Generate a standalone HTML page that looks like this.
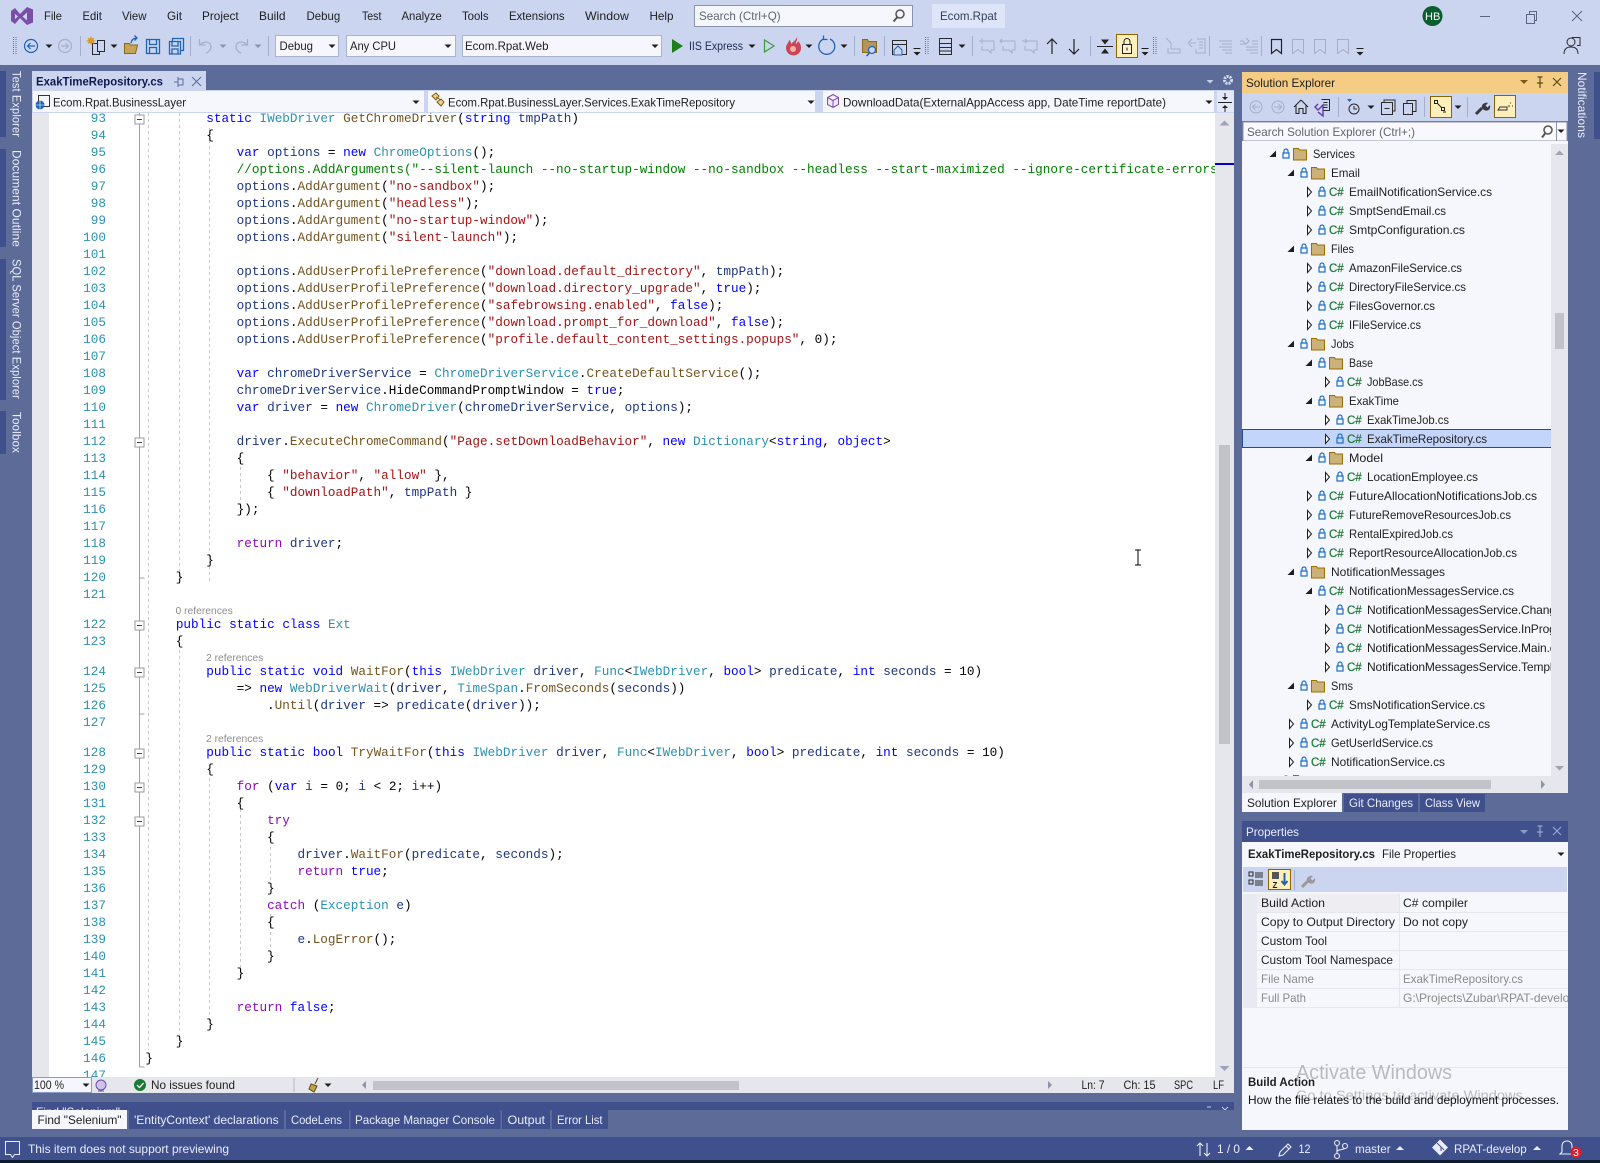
<!DOCTYPE html>
<html lang="en"><head><meta charset="utf-8"><title>ExakTimeRepository.cs - Visual Studio</title>
<style>
html,body{margin:0;padding:0;background:#5d6b99;}
body{position:relative;width:1600px;height:1163px;overflow:hidden;}
svg{position:absolute;left:0;top:0;font:12px "Liberation Sans",sans-serif;fill:#1e1e1e;}
.w{fill:#e9edfa}.g{fill:#8a8a8a}
.n{letter-spacing:-.12px}
#ed{position:absolute;left:32px;top:113px;width:1183px;height:964px;overflow:hidden;font:12.68px/17px "Liberation Mono",monospace;color:#000;}
#in{margin-top:-2.8px}
#ed p{margin:0;height:17px;position:relative;white-space:pre;padding-left:113.4px;}
#ed p a{position:absolute;left:0;top:0;width:74px;text-align:right;color:#2b91af;}
#ed div.l{height:13px;font:10.3px/13px "Liberation Sans",sans-serif;color:#8e8e8e;white-space:pre;position:relative;top:2px;}
.k{color:#0000ff}.t{color:#2b91af}.m{color:#74531f}.s{color:#a31515}.c{color:#008000}.v{color:#1f377f}.f{color:#8f08c4}
</style></head><body>
<svg width="1600" height="1163" viewBox="0 0 1600 1163">
<defs>
<path id="td" d="M-3.5-1.5h7l-3.500 3.500z" fill="#1e1e1e"/>
<path id="tg" d="M-3.500-1.500h7l-3.500 3.500z" fill="#8c94ad"/>
<g id="tb"><path d="M-3.500-3.500h7" stroke="#1e1e1e" fill="none"/><path d="M-3.500 0h7l-3.500 3.500z" fill="#1e1e1e"/></g>
<path id="tu" d="M-4 2h8l-4-4z" fill="#e9edfa"/>
<g id="lk" fill="none" stroke="#1c6ec4" stroke-width="1.200"><path d="M-2-1v-2a2 2 0 0 1 4 0v2"/><rect x="-3" y="-1" width="6" height="5"/></g>
<g id="F"><path d="M1269.500-1h6.500v-6.500z" fill="#1e1e1e"/><use href="#lk" x="1286" y="-4"/><path d="M1293.500-9.500h5l1 1.500h7v10h-13z" fill="#cbb27a" stroke="#996f00"/></g>
<g id="C"><path d="M1271.500-8.500l4 4.500-4 4.500z" fill="#fff" stroke="#1e1e1e"/><use href="#lk" x="1286" y="-4"/><text x="1293" y="0" style="font-size:11.500px" fill="#1e7b34" stroke="#1e7b34" stroke-width=".25">C#</text></g>
<g id="O"><path d="M1269.500-1h6.500v-6.500z" fill="#1e1e1e"/><use href="#lk" x="1286" y="-4"/><text x="1293" y="0" style="font-size:11.500px" fill="#1e7b34" stroke="#1e7b34" stroke-width=".25">C#</text></g>
<g id="cm" fill="none" stroke="#a6aec8"><path d="M-5-5h12v9h-3v3l-3-3h-6v-4"/></g>
<g id="grip" fill="none" stroke="#5d6b99" stroke-dasharray="1 1"><path d="M-1.500-9v18M1-9v18"/></g>
<g id="fb"><rect x="-4.500" y="-4.500" width="9" height="9" fill="#fff" stroke="#9a9a9a"/><path d="M-2.500 0h5" stroke="#444"/></g>
<clipPath id="tree"><rect x="1243" y="144" width="308" height="632"/></clipPath>
<clipPath id="pv"><rect x="1400" y="894" width="168" height="120"/></clipPath>
<clipPath id="fp"><rect x="32" y="1102" width="1202" height="8"/></clipPath>
</defs>

<!-- frame -->
<rect width="1600" height="1163" fill="#5d6b99"/>
<rect width="1600" height="65" fill="#ccd5f0"/>

<!-- logo & menu -->
<path d="M11 11l4-3 5 6 7-7 6 2.500v13l-6 2.500-7-7-5 6-4-3v-10zm4 3v5l3-2.500zm12-1.500l-4.500 4 4.500 4z" fill="#7b4fa8" fill-rule="evenodd"/>
<g><text x="44" y="20" textLength="18" lengthAdjust="spacingAndGlyphs">File</text><text x="82.500" y="20" textLength="19.400" lengthAdjust="spacingAndGlyphs">Edit</text><text x="122" y="20" textLength="24.500" lengthAdjust="spacingAndGlyphs">View</text><text x="167" y="20" textLength="15" lengthAdjust="spacingAndGlyphs">Git</text><text x="202" y="20" textLength="36.700" lengthAdjust="spacingAndGlyphs">Project</text><text x="259" y="20" textLength="26.500" lengthAdjust="spacingAndGlyphs">Build</text><text x="306.500" y="20" textLength="33.700" lengthAdjust="spacingAndGlyphs">Debug</text><text x="362" y="20" textLength="19.400" lengthAdjust="spacingAndGlyphs">Test</text><text x="401.500" y="20" textLength="40.300" lengthAdjust="spacingAndGlyphs">Analyze</text><text x="462" y="20" textLength="26.500" lengthAdjust="spacingAndGlyphs">Tools</text><text x="509" y="20" textLength="55.600" lengthAdjust="spacingAndGlyphs">Extensions</text><text x="585" y="20" textLength="43.900" lengthAdjust="spacingAndGlyphs">Window</text><text x="649.500" y="20" textLength="24" lengthAdjust="spacingAndGlyphs">Help</text></g>
<rect x="694.500" y="5.500" width="218" height="21" fill="#f6f7fd" stroke="#8a93ad"/>
<text x="699" y="20" fill="#5f6670" textLength="81.600" lengthAdjust="spacingAndGlyphs">Search (Ctrl+Q)</text>
<g fill="none" stroke="#555" stroke-width="1.500"><circle cx="900" cy="14" r="4"/><path d="M897.500 17l-4 4.500" stroke-width="2"/></g>
<rect x="932" y="4" width="73" height="24" fill="#dfe5f8"/><text x="940" y="20" fill="#333d5c" textLength="57" lengthAdjust="spacingAndGlyphs">Ecom.Rpat</text>
<circle cx="1432.500" cy="16" r="10" fill="#0b5c2e"/><text x="1425" y="20" fill="#fff" style="font-size:11px">HB</text>
<g fill="none" stroke="#5b6686"><path d="M1480 16.500h10M1526.500 14.500h8v9h-8zM1529.500 14.500v-3h7v9h-2M1572 11l10 10M1582 11l-10 10"/></g>

<!-- toolbar -->
<use href="#grip" x="15" y="46"/>
<g fill="none" stroke="#1e64b4" stroke-width="1.200"><circle cx="31" cy="46" r="6.500"/><path d="M35 46h-7.500M30.500 43l-3 3 3 3"/></g><use href="#td" x="49" y="46"/>
<g fill="none" stroke="#a6aec8" stroke-width="1.200"><circle cx="65" cy="46" r="6.500"/><path d="M61 46h7.500M65.500 43l3 3-3 3"/></g>
<path d="M80.500 36v20M190.500 36v20M268.500 36v20M854.500 36v20M884.500 36v20M972.500 36v20M1090.500 36v20M1209.500 36v20M1261.500 36v20" stroke="#a4afce"/>
<g fill="none" stroke="#2a2a2a"><rect x="92.500" y="43.500" width="7" height="11"/><rect x="97.500" y="40.500" width="7" height="11" fill="#ccd5f0"/></g><path d="M91 36l1 2.500 2.500-1-1 2.500 2.500 1-2.500 1 1 2-2.500-1-1 2.500-1-2.500-2.500 1 1-2-2.500-1 2.500-1-1-2.500 2.500 1z" fill="#d99a2b"/>
<use href="#td" x="114" y="46"/>
<path d="M124.500 53.500v-10h5l1 1.500h7l-2 8.500z" fill="#c7a356" stroke="#8b6a14"/><path d="M131 43q1-5 6-5M134.500 35.500l2.500 2.500-2.500 2.500" fill="none" stroke="#1e64b4" stroke-width="1.300"/>
<g fill="none" stroke="#1e64b4" stroke-width="1.300"><path d="M146.500 39.500h13v14h-13zM149.500 39.500v5h7v-5M149.500 53.500v-6h7v6"/><path d="M169.500 41.500h11v12.500h-11zM172 41.500v4.500h6v-4.500M172 54v-5h6v5M172.500 41v-2.500h11v12h-3"/></g>
<g fill="none" stroke="#a6aec8" stroke-width="1.300"><path d="M199.500 39v6h6M200 45c3-4 10-4 11 1 .5 3-2 6-5 7"/><path d="M247.500 39v6h-6M247 45c-3-4-10-4-11 1-.5 3 2 6 5 7"/></g>
<use href="#tg" x="223" y="46"/><use href="#tg" x="258" y="46"/>
<g fill="#f6f7fd" stroke="#a9b4d2"><rect x="275.500" y="35.500" width="63" height="21"/><rect x="346.500" y="35.500" width="109" height="21"/><rect x="462.500" y="35.500" width="199" height="21"/></g>
<text x="279.500" y="50" textLength="33.500" lengthAdjust="spacingAndGlyphs">Debug</text><text x="350" y="50" textLength="46" lengthAdjust="spacingAndGlyphs">Any CPU</text><text x="465" y="50" textLength="83.500" lengthAdjust="spacingAndGlyphs">Ecom.Rpat.Web</text>
<use href="#td" x="332" y="46"/><use href="#td" x="448" y="46"/><use href="#td" x="655" y="46"/>
<path d="M672 39l11 7-11 7z" fill="#1e7e1e"/><text x="689" y="50" fill="#1b2a55" textLength="54" lengthAdjust="spacingAndGlyphs">IIS Express</text><use href="#td" x="752" y="46"/>
<path d="M764.500 40l9.500 6-9.500 6z" fill="none" stroke="#3f9a3f" stroke-width="1.200"/>
<path d="M797 37c1 4-2 4-1 7 1-1 2-2 2-3 3 3 3 6 3 7a7.500 7.500 0 0 1-15 0c0-4 3-5 3-8 2 1 2 3 2 4 2-2 5-4 6-7z" fill="#cc4452"/><circle cx="793" cy="49" r="3" fill="#f3b2ad"/><use href="#td" x="809" y="46"/>
<path d="M830 39a8 8 0 1 1-6.500 0M823.500 35.500v4h4" fill="none" stroke="#1e64b4" stroke-width="1.300"/><use href="#td" x="844" y="46"/>
<path d="M862.500 52.500v-13h5l1 2h8v11z" fill="#b3955a" stroke="#8b6a14"/><circle cx="872" cy="50" r="3.500" fill="#ccd5f0" stroke="#1e64b4" stroke-width="1.200"/><path d="M869.500 53l-3 3" stroke="#1e64b4" stroke-width="1.500"/>
<path d="M892.500 40.500h14v14h-14zM892.500 44.500h14" fill="none" stroke="#2a2a2a"/><path d="M894 50l4-4 4 4v5h-8z" fill="#ccd5f0" stroke="#1e64b4"/>
<use href="#tb" x="917" y="52"/><use href="#grip" x="927" y="46"/>
<path d="M939.500 38.500h12v16h-12zM939.500 43.500h12M939.500 47.500h12M939.500 51h12" fill="none" stroke="#2a2a2a"/><use href="#td" x="962" y="46"/>
<use href="#cm" x="987" y="46"/><use href="#cm" x="1008" y="46"/><use href="#cm" x="1030" y="46"/>
<path d="M979 41h6M982 38v6M1000 41h5M1002 39l-2 2 2 2M1022 41h5M1025 39l2 2-2 2" fill="none" stroke="#a6aec8"/>
<g fill="none" stroke="#222" stroke-width="1.200"><path d="M1052 54v-15M1047 44l5-5 5 5M1074 39v15M1069 49l5 5 5-5"/></g>
<path d="M1097 46.500h16" stroke="#222"/><path d="M1105 44.500l-4-5h8zM1105 48.500l-4 5h8z" fill="#222"/>
<rect x="1116.500" y="34.500" width="21" height="23" fill="#ffefbb" stroke="#8f6100"/><rect x="1122.500" y="44.500" width="9" height="9" fill="#fff3cf" stroke="#222"/><path d="M1124 44.500v-3a3 3 0 0 1 6 0v3M1127 47.500v3" fill="none" stroke="#222"/>
<use href="#tb" x="1145" y="52"/><use href="#grip" x="1155" y="46"/>
<g fill="none" stroke="#a6aec8"><path d="M1166 38l5 5v6h9v4h-12v-5M1188 43l4-4M1188 43l4 4M1190 43h6M1197 39h8v14h-9v-4M1199 42h4M1199 45h4M1199 48h4M1219 41h13M1222 44h10M1219 47h13M1222 50h10M1225 53h7M1240 41h3l3 3h-6M1246 38l3 3-3 3M1252 41h6M1252 44h6M1246 47h12M1246 50h12M1250 53h8"/><path d="M1292.500 39.500h11v14l-5.500-4-5.500 4zM1314.500 39.500h11v14l-5.500-4-5.500 4zM1337.500 39.500h11v14l-5.500-4-5.500 4z"/></g>
<path d="M1271.500 39.500h10v14l-5-4-5 4z" fill="none" stroke="#222" stroke-width="1.200"/><use href="#tb" x="1360" y="52"/>
<g fill="none" stroke="#2a2a2a"><circle cx="1571" cy="42" r="4"/><path d="M1564 54c0-5 3-7 7-7s7 2 7 7M1572 37.500h8v8h-3"/></g>

<!-- left side tabs -->
<g fill="#40508d"><rect x="0" y="71" width="6" height="66"/><rect x="0" y="149" width="6" height="98"/><rect x="0" y="259" width="6" height="141"/><rect x="0" y="411" width="6" height="43"/><rect x="1594" y="72" width="6" height="67"/></g>
<g class="w" style="letter-spacing:.1px"><text transform="translate(12.500,71) rotate(90)" textLength="66" lengthAdjust="spacingAndGlyphs">Test Explorer</text><text transform="translate(12.500,150) rotate(90)" textLength="97" lengthAdjust="spacingAndGlyphs">Document Outline</text><text transform="translate(12.500,259) rotate(90)" textLength="140" lengthAdjust="spacingAndGlyphs">SQL Server Object Explorer</text><text transform="translate(12.500,412) rotate(90)" textLength="41" lengthAdjust="spacingAndGlyphs">Toolbox</text><text transform="translate(1578,72) rotate(90)" textLength="66" lengthAdjust="spacingAndGlyphs">Notifications</text></g>

<!-- editor tab -->
<rect x="32" y="71" width="174" height="19" fill="#ccd5f0"/>
<text x="36" y="85.500" style="font-weight:bold" fill="#0e1a4d" textLength="127" lengthAdjust="spacingAndGlyphs">ExakTimeRepository.cs</text>
<g fill="none" stroke="#5d6b99"><path d="M174 82h4M178 79h5v6h-5zM178 77v10M192 77l9 9M201 77l-9 9" /></g>
<path d="M1206.500 80h7l-3.500 3.500z" fill="#c6cee8"/>
<circle cx="1228" cy="80" r="3.500" fill="none" stroke="#d6dcf2" stroke-width="3" stroke-dasharray="2 1"/>

<!-- nav bar -->
<rect x="32" y="90" width="1202" height="23" fill="#ccd5f0"/>
<g fill="#f6f7fd"><rect x="33" y="91" width="391" height="21"/><rect x="428" y="91" width="387" height="21"/><rect x="823" y="91" width="391" height="21"/><rect x="1217" y="91" width="17" height="21" fill="#e4e9f9"/></g>
<rect x="38.500" y="95.500" width="11" height="11" fill="none" stroke="#333"/><circle cx="40" cy="105" r="4.500" fill="#1e64b4"/><path d="M35.500 105h9M40 100.500v9" stroke="#fff" stroke-width=".6"/>
<text x="53" y="106.500" textLength="133" lengthAdjust="spacingAndGlyphs">Ecom.Rpat.BusinessLayer</text><use href="#td" x="416" y="102"/>
<path d="M432 96l4-3 3 3-3 4zM437 102l4-3 3 3-3 4zM436 97l5 3" fill="#f0d28a" stroke="#7a5a14"/><text x="448" y="106.500" textLength="287" lengthAdjust="spacingAndGlyphs">Ecom.Rpat.BusinessLayer.Services.ExakTimeRepository</text><use href="#td" x="811" y="102"/>
<path d="M833 94.500l5.500 3v7l-5.500 3-5.500-3v-7zM827.500 97.500l5.500 3 5.500-3M833 100.500v7" fill="#f1e8fa" stroke="#7b4fa8"/><text x="843" y="106.500" textLength="323" lengthAdjust="spacingAndGlyphs">DownloadData(ExternalAppAccess app, DateTime reportDate)</text><use href="#td" x="1209" y="102"/>
<path d="M1218 102.500h14M1225 93v6M1225 106v6" stroke="#222"/><path d="M1222 97l3 3 3-3zM1222 108l3-3 3 3z" fill="#222"/>

<!-- editor body -->
<rect x="32" y="113" width="1183" height="964" fill="#fff"/>
<rect x="32" y="113" width="17" height="964" fill="#e6e7ed"/>
<path d="M139.500 113v954h5M139.500 714h5M139.500 578h5" fill="none" stroke="#a0a0a0"/>
<g fill="none" stroke="#c8c8c8" stroke-dasharray="3 3"><path d="M148.500 113v937M179.500 113v472M179.500 650v390M209.500 128v453M209.500 778v243M240.500 461v45M240.500 797v178M270.500 847v34M270.500 914v34"/></g>
<use href="#fb" x="139.500" y="119.500"/><use href="#fb" x="139.500" y="442.500"/><use href="#fb" x="139.500" y="625.500"/><use href="#fb" x="139.500" y="672.500"/><use href="#fb" x="139.500" y="753.500"/><use href="#fb" x="139.500" y="787.500"/><use href="#fb" x="139.500" y="821.500"/>

<!-- editor scrollbar -->
<rect x="1215" y="113" width="19" height="964" fill="#e6e7ed"/>
<path d="M1219.500 125.500h10l-5-5zM1219.500 1066h10l-5 5z" fill="#9ea4b4"/>
<rect x="1219" y="445" width="11" height="299" fill="#c2c3c9"/>
<rect x="1215" y="163" width="19" height="2" fill="#0000d0"/>
<path d="M1135 550h6M1138 550v15M1135 565h6" stroke="#000" fill="none"/>

<!-- editor status -->
<rect x="32" y="1077" width="1202" height="16" fill="#e6e7ed"/>
<rect x="32.500" y="1077.500" width="59" height="15" fill="#f6f7fd" stroke="#8a99c8"/><text x="34" y="1089" textLength="30" lengthAdjust="spacingAndGlyphs">100 %</text><use href="#td" x="86" y="1085"/>
<circle cx="101" cy="1085" r="5" fill="#cfc3ea" stroke="#6a4fa8"/><path d="M98 1091h6" stroke="#6a4fa8"/>
<circle cx="140" cy="1085" r="6" fill="#1a7a34"/><path d="M137 1085l2.500 2.500 4-4.500" stroke="#fff" stroke-width="1.300" fill="none"/>
<text x="151" y="1089" textLength="84" lengthAdjust="spacingAndGlyphs">No issues found</text><path d="M294 1078v14" stroke="#b5b8c4"/>
<path d="M318 1078l-3 6M311 1084l6 2-3 6-5-3z" fill="#c4a44a" stroke="#5b4a1e"/><use href="#td" x="328" y="1085"/>
<path d="M366 1081v8l-4-4z" fill="#8e94a6"/><rect x="373" y="1081" width="366" height="9" fill="#c2c3c9"/><path d="M1048 1081v8l4-4z" fill="#8e94a6"/>
<text x="1081.500" y="1089" textLength="23" lengthAdjust="spacingAndGlyphs">Ln: 7</text><text x="1123.500" y="1089" textLength="32" lengthAdjust="spacingAndGlyphs">Ch: 15</text><text x="1174" y="1089" textLength="19" lengthAdjust="spacingAndGlyphs">SPC</text><text x="1213" y="1089" textLength="11" lengthAdjust="spacingAndGlyphs">LF</text>

<!-- bottom tool window -->
<rect x="32" y="1102" width="1202" height="8" fill="#40508d"/>
<g clip-path="url(#fp)"><text x="36" y="1116" class="w" textLength="84" lengthAdjust="spacingAndGlyphs">Find "Selenium"</text><path d="M1207 1107h4M1222 1107l6 6M1228 1107l-6 6" stroke="#c6cee8"/></g>
<rect x="32" y="1110" width="95" height="19" fill="#f6f7fd"/><text x="37.500" y="1124" textLength="84" lengthAdjust="spacingAndGlyphs">Find "Selenium"</text>
<g fill="#40508d"><rect x="129" y="1110" width="155" height="19"/><rect x="286" y="1110" width="63" height="19"/><rect x="350.500" y="1110" width="150" height="19"/><rect x="502" y="1110" width="48" height="19"/><rect x="552" y="1110" width="56" height="19"/></g>
<g class="w"><text x="134" y="1124" textLength="144.600" lengthAdjust="spacingAndGlyphs">'EntityContext' declarations</text><text x="291" y="1124" textLength="51" lengthAdjust="spacingAndGlyphs">CodeLens</text><text x="355" y="1124" textLength="140" lengthAdjust="spacingAndGlyphs">Package Manager Console</text><text x="507.500" y="1124" textLength="37.500" lengthAdjust="spacingAndGlyphs">Output</text><text x="557" y="1124" textLength="45.500" lengthAdjust="spacingAndGlyphs">Error List</text></g>

<!-- status bar -->
<rect x="0" y="1137" width="1600" height="23" fill="#40508d"/><rect x="0" y="1160" width="1600" height="3" fill="#0e1b2c"/>
<path d="M5.500 1141.500h14v13h-5l-2 3-2-3h-5z" fill="none" stroke="#e9edfa"/>
<text x="28" y="1153" class="w" textLength="201" lengthAdjust="spacingAndGlyphs">This item does not support previewing</text>
<g fill="none" stroke="#e9edfa" stroke-width="1.100"><path d="M1200 1156v-13M1197 1146l3-3 3 3M1207 1143v13M1204 1153l3 3 3-3"/><path d="M1279 1156l1-4 8-8 3 3-8 8zM1286 1146l3 3"/><circle cx="1337" cy="1143" r="2.500"/><circle cx="1337" cy="1156" r="2.500"/><circle cx="1345" cy="1146" r="2.500"/><path d="M1337 1145.500v8M1337 1152c0-3 8-2 8-4"/><path d="M1567 1141c-3 0-5 2-5 5v6l-2 2h14l-2-2v-6c0-3-2-5-5-5z" transform="translate(0,0)"/></g>
<text x="1217" y="1153" class="w" textLength="23" lengthAdjust="spacingAndGlyphs">1 / 0</text><use href="#tu" x="1249.500" y="1148"/>
<text x="1298.500" y="1153" class="w" textLength="12" lengthAdjust="spacingAndGlyphs">12</text>
<text x="1355" y="1153" class="w" textLength="35.600" lengthAdjust="spacingAndGlyphs">master</text><use href="#tu" x="1400" y="1148"/>
<path d="M1440 1139.500l8 8-8 8-8-8z" fill="#e9edfa"/><path d="M1437 1143l4 4v4M1441 1147l3 3" stroke="#40508d" fill="none"/>
<text x="1454" y="1153" class="w" textLength="72.700" lengthAdjust="spacingAndGlyphs">RPAT-develop</text><use href="#tu" x="1537" y="1148"/>
<circle cx="1576" cy="1152" r="5.500" fill="#e01b24"/><text x="1573" y="1156" fill="#fff" style="font-size:10.500px">3</text>

<!-- Solution Explorer -->
<rect x="1242" y="72" width="326" height="21" fill="#f5cc84"/><text x="1246" y="87" textLength="89" lengthAdjust="spacingAndGlyphs">Solution Explorer</text>
<path d="M1520 80h8l-4 4z" fill="#7a5a14"/><path d="M1537.500 77h5M1540 77v6M1537 83h6M1540 83v5M1553 78l8 8M1561 78l-8 8" stroke="#5b4a1e" fill="none" stroke-width="1.200"/>
<rect x="1242" y="93" width="326" height="28" fill="#ccd5f0"/>
<g fill="none" stroke="#a6aec8"><circle cx="1256" cy="107" r="6"/><path d="M1260 107h-7M1255.500 104l-3 3 3 3"/><circle cx="1278" cy="107" r="6"/><path d="M1274 107h7M1278.500 104l3 3-3 3"/></g>
<path d="M1301 100l-7 7M1301 100l7 7M1296 105.500v8h3v-5h4v5h3v-8" fill="none" stroke="#2a2a2a" stroke-width="1.100"/>
<path d="M1318 104l-3 3 3 3 5-5v11l-5-4" fill="none" stroke="#6a3fb0" stroke-width="1.500"/><path d="M1321.500 99.500h8v11h-6M1323.500 102.500h4M1323.500 105h4M1323.500 107.500h4" fill="none" stroke="#2a2a2a"/>
<path d="M1338.500 97v20M1424.500 97v20M1467.500 97v20" stroke="#a4afce"/>
<circle cx="1354" cy="109" r="5" fill="none" stroke="#2a2a2a"/><path d="M1354 106v3h3" fill="none" stroke="#2a2a2a"/><path d="M1347 99h5l-2.500 3z" fill="#1e64b4"/><use href="#td" x="1371" y="107"/>
<path d="M1381.500 102.500h11v12h-11zM1384 102.500v-2.500h11v11h-2.500M1384.500 108.500h5" fill="none" stroke="#2a2a2a"/>
<path d="M1403.500 103.500h9v11h-9zM1407 103.500v-3h9v11h-3.500" fill="none" stroke="#2a2a2a"/>
<rect x="1430.500" y="96.500" width="21" height="21" fill="#ffefbb" stroke="#8f6100"/><path d="M1434.500 100.500h3v3h-3zM1441.500 107.500h3v3h-3zM1437 103l5 5M1446 112h-3" fill="none" stroke="#222"/><use href="#td" x="1458" y="107"/>
<path d="M1476 114l6-6" stroke="#3a3a3a" stroke-width="3"/><path d="M1482 108c-1-3 2-6 6-5l-2.500 2.500 2 2 2.500-2.500c1 4-2 7-6 5z" fill="#3a3a3a"/>
<rect x="1494.500" y="95.500" width="21" height="22" fill="#ffefbb" stroke="#8f6100"/><path d="M1498 110h9v-3h-7zM1508 106h2M1510 103h1M1512 106h1" fill="none" stroke="#333"/>
<rect x="1243" y="122" width="324" height="19" fill="#f9f9fd" stroke="#8a93ad"/><text x="1247" y="136" fill="#5f6670" textLength="168" lengthAdjust="spacingAndGlyphs">Search Solution Explorer (Ctrl+;)</text>
<g fill="none" stroke="#555" stroke-width="1.500"><circle cx="1548" cy="130" r="4"/><path d="M1545.500 133l-3.500 4.500" stroke-width="2"/></g><path d="M1556.500 122v19" stroke="#8a93ad"/><use href="#td" x="1561" y="131"/>
<rect x="1242" y="141" width="326" height="635" fill="#f6f7fd"/>
<rect x="1551" y="144" width="17" height="632" fill="#e6e7ed"/>
<path d="M1555 155h9l-4.500-4.500zM1555 766h9l-4.500 4.500z" fill="#9ea4b4"/><rect x="1555" y="313" width="9" height="36" fill="#c2c3c9"/>
<rect x="1242" y="429" width="309" height="19" fill="#c3d5fb"/><path d="M1242 429.500h309M1242 447.500h309M1242.500 429v19" stroke="#2a4a8d" fill="none"/>
<g clip-path="url(#tree)">
<use href="#F" y="158"/><text x="1313" y="158" textLength="42" lengthAdjust="spacingAndGlyphs">Services</text>
<use href="#F" x="18" y="177"/><text x="1331" y="177" textLength="29" lengthAdjust="spacingAndGlyphs">Email</text>
<use href="#C" x="36" y="196"/><text x="1349" y="196" textLength="143" lengthAdjust="spacingAndGlyphs">EmailNotificationService.cs</text>
<use href="#C" x="36" y="215"/><text x="1349" y="215" textLength="97" lengthAdjust="spacingAndGlyphs">SmptSendEmail.cs</text>
<use href="#C" x="36" y="234"/><text x="1349" y="234" textLength="116" lengthAdjust="spacingAndGlyphs">SmtpConfiguration.cs</text>
<use href="#F" x="18" y="253"/><text x="1331" y="253" textLength="23" lengthAdjust="spacingAndGlyphs">Files</text>
<use href="#C" x="36" y="272"/><text x="1349" y="272" textLength="113" lengthAdjust="spacingAndGlyphs">AmazonFileService.cs</text>
<use href="#C" x="36" y="291"/><text x="1349" y="291" textLength="117" lengthAdjust="spacingAndGlyphs">DirectoryFileService.cs</text>
<use href="#C" x="36" y="310"/><text x="1349" y="310" textLength="86" lengthAdjust="spacingAndGlyphs">FilesGovernor.cs</text>
<use href="#C" x="36" y="329"/><text x="1349" y="329" textLength="72" lengthAdjust="spacingAndGlyphs">IFileService.cs</text>
<use href="#F" x="18" y="348"/><text x="1331" y="348" textLength="23" lengthAdjust="spacingAndGlyphs">Jobs</text>
<use href="#F" x="36" y="367"/><text x="1349" y="367" textLength="24" lengthAdjust="spacingAndGlyphs">Base</text>
<use href="#C" x="54" y="386"/><text x="1367" y="386" textLength="56" lengthAdjust="spacingAndGlyphs">JobBase.cs</text>
<use href="#F" x="36" y="405"/><text x="1349" y="405" textLength="50" lengthAdjust="spacingAndGlyphs">ExakTime</text>
<use href="#C" x="54" y="424"/><text x="1367" y="424" textLength="82" lengthAdjust="spacingAndGlyphs">ExakTimeJob.cs</text>
<use href="#C" x="54" y="443"/><text x="1367" y="443" textLength="120" lengthAdjust="spacingAndGlyphs">ExakTimeRepository.cs</text>
<use href="#F" x="36" y="462"/><text x="1349" y="462" textLength="34" lengthAdjust="spacingAndGlyphs">Model</text>
<use href="#C" x="54" y="481"/><text x="1367" y="481" textLength="111" lengthAdjust="spacingAndGlyphs">LocationEmployee.cs</text>
<use href="#C" x="36" y="500"/><text x="1349" y="500" textLength="188" lengthAdjust="spacingAndGlyphs">FutureAllocationNotificationsJob.cs</text>
<use href="#C" x="36" y="519"/><text x="1349" y="519" textLength="162" lengthAdjust="spacingAndGlyphs">FutureRemoveResourcesJob.cs</text>
<use href="#C" x="36" y="538"/><text x="1349" y="538" textLength="104" lengthAdjust="spacingAndGlyphs">RentalExpiredJob.cs</text>
<use href="#C" x="36" y="557"/><text x="1349" y="557" textLength="168" lengthAdjust="spacingAndGlyphs">ReportResourceAllocationJob.cs</text>
<use href="#F" x="18" y="576"/><text x="1331" y="576" textLength="114" lengthAdjust="spacingAndGlyphs">NotificationMessages</text>
<use href="#O" x="36" y="595"/><text x="1349" y="595" textLength="165" lengthAdjust="spacingAndGlyphs">NotificationMessagesService.cs</text>
<use href="#C" x="54" y="614"/><text x="1367" y="614" class="n">NotificationMessagesService.ChangeBooking.cs</text>
<use href="#C" x="54" y="633"/><text x="1367" y="633" class="n">NotificationMessagesService.InProgress.cs</text>
<use href="#C" x="54" y="652"/><text x="1367" y="652" class="n">NotificationMessagesService.Main.cs</text>
<use href="#C" x="54" y="671"/><text x="1367" y="671" class="n">NotificationMessagesService.Templates.cs</text>
<use href="#F" x="18" y="690"/><text x="1331" y="690" textLength="22" lengthAdjust="spacingAndGlyphs">Sms</text>
<use href="#C" x="36" y="709"/><text x="1349" y="709" textLength="136" lengthAdjust="spacingAndGlyphs">SmsNotificationService.cs</text>
<use href="#C" x="18" y="728"/><text x="1331" y="728" textLength="159" lengthAdjust="spacingAndGlyphs">ActivityLogTemplateService.cs</text>
<use href="#C" x="18" y="747"/><text x="1331" y="747" textLength="102" lengthAdjust="spacingAndGlyphs">GetUserIdService.cs</text>
<use href="#C" x="18" y="766"/><text x="1331" y="766" textLength="114" lengthAdjust="spacingAndGlyphs">NotificationService.cs</text>
<use href="#F" y="785"/>
</g>
<rect x="1242" y="776" width="326" height="17" fill="#e6e7ed"/>
<path d="M1253 780v9l-4-4.500zM1541 780v9l4-4.500z" fill="#8e94a6"/><rect x="1259" y="780" width="232" height="9" fill="#c2c3c9"/>
<rect x="1242" y="793" width="100" height="19" fill="#f6f7fd"/><text x="1247" y="807" textLength="90" lengthAdjust="spacingAndGlyphs">Solution Explorer</text>
<rect x="1344" y="794" width="74" height="18" fill="#40508d"/><rect x="1420" y="794" width="65" height="18" fill="#40508d"/>
<text x="1349" y="807" class="w" textLength="64" lengthAdjust="spacingAndGlyphs">Git Changes</text><text x="1425" y="807" class="w" textLength="55" lengthAdjust="spacingAndGlyphs">Class View</text>

<!-- Properties -->
<rect x="1242" y="821" width="326" height="21" fill="#40508d"/><text x="1246" y="836" class="w" textLength="53" lengthAdjust="spacingAndGlyphs">Properties</text>
<path d="M1520 830h8l-4 4z" fill="#8f9bc4"/><path d="M1537.500 826h5M1540 826v6M1537 832h6M1540 832v5M1553 827l8 8M1561 827l-8 8" stroke="#9aa5cc" fill="none" stroke-width="1.200"/>
<rect x="1242" y="842" width="326" height="288" fill="#f6f7fd"/>
<text x="1248" y="858" style="font-weight:bold" textLength="127" lengthAdjust="spacingAndGlyphs">ExakTimeRepository.cs</text><text x="1382" y="858" textLength="74" lengthAdjust="spacingAndGlyphs">File Properties</text><use href="#td" x="1561" y="854"/>
<rect x="1243" y="867" width="324" height="25" fill="#ccd5f0"/>
<path d="M1249 872h4v4h-4zM1249 880h4v4h-4zM1255 873h8M1255 875h8M1255 877h8M1255 881h8M1255 883h8M1255 885h8" fill="none" stroke="#2a2a2a"/>
<rect x="1268.500" y="869.500" width="22" height="20" fill="#ffefbb" stroke="#8f6100"/><rect x="1272" y="872" width="7" height="7" fill="#555"/><text x="1272.500" y="888" style="font:bold 8px 'Liberation Sans'">Z</text><path d="M1284.500 873v11M1281.500 881l3 3.500 3-3.500" fill="none" stroke="#1e64b4" stroke-width="2"/>
<path d="M1294.500 870v20" stroke="#a4afce"/><path d="M1302 887l6-6" stroke="#9a9a9a" stroke-width="3"/><path d="M1307 881c-1-3 2-6 6-5l-2.500 2.500 2 2 2.500-2.500c1 4-2 7-6 5z" fill="#9a9a9a"/>
<rect x="1243" y="894" width="14" height="114" fill="#e9eaf1"/>
<rect x="1257" y="894" width="142" height="18" fill="#ededf2"/>
<g stroke="#e6e7ee"><path d="M1257 912.500h311M1257 931.500h311M1257 950.500h311M1257 969.500h311M1257 988.500h311M1257 1007.500h311M1399.500 894v114M1242 1067.500h326"/></g>
<text x="1261" y="907" textLength="64" lengthAdjust="spacingAndGlyphs">Build Action</text><text x="1403" y="907" textLength="65" lengthAdjust="spacingAndGlyphs">C# compiler</text>
<text x="1261" y="926" textLength="134" lengthAdjust="spacingAndGlyphs">Copy to Output Directory</text><text x="1403" y="926" textLength="65" lengthAdjust="spacingAndGlyphs">Do not copy</text>
<text x="1261" y="945" textLength="66" lengthAdjust="spacingAndGlyphs">Custom Tool</text><text x="1261" y="964" textLength="132" lengthAdjust="spacingAndGlyphs">Custom Tool Namespace</text>
<text x="1261" y="983" class="g" textLength="53" lengthAdjust="spacingAndGlyphs">File Name</text><text x="1403" y="983" class="g" textLength="120" lengthAdjust="spacingAndGlyphs">ExakTimeRepository.cs</text>
<text x="1261" y="1002" class="g" textLength="45" lengthAdjust="spacingAndGlyphs">Full Path</text><g clip-path="url(#pv)"><text x="1403" y="1002" class="g">G:\Projects\Zubar\RPAT-develop\Ecom.Rpat</text></g>
<text x="1296" y="1079" style="font-size:20px" fill="#8a8a8a" opacity=".55" textLength="156" lengthAdjust="spacingAndGlyphs">Activate Windows</text>
<text x="1296" y="1100" style="font-size:13.400px" fill="#8a8a8a" opacity=".55" textLength="231" lengthAdjust="spacingAndGlyphs">Go to Settings to activate Windows.</text>
<text x="1248" y="1086" style="font-weight:bold" textLength="67" lengthAdjust="spacingAndGlyphs">Build Action</text>
<text x="1248" y="1104" fill="#111" textLength="311" lengthAdjust="spacingAndGlyphs">How the file relates to the build and deployment processes.</text>
</svg>

<div id="ed"><div id="in">
<p><a>93</a>        <span class="k">static</span> <span class="t">IWebDriver</span> <span class="m">GetChromeDriver</span>(<span class="k">string</span> <span class="v">tmpPath</span>)</p>
<p><a>94</a>        {</p>
<p><a>95</a>            <span class="k">var</span> <span class="v">options</span> = <span class="k">new</span> <span class="t">ChromeOptions</span>();</p>
<p><a>96</a>            <span class="c">//options.AddArguments("--silent-launch --no-startup-window --no-sandbox --headless --start-maximized --ignore-certificate-errors");</span></p>
<p><a>97</a>            <span class="v">options</span>.<span class="m">AddArgument</span>(<span class="s">"no-sandbox"</span>);</p>
<p><a>98</a>            <span class="v">options</span>.<span class="m">AddArgument</span>(<span class="s">"headless"</span>);</p>
<p><a>99</a>            <span class="v">options</span>.<span class="m">AddArgument</span>(<span class="s">"no-startup-window"</span>);</p>
<p><a>100</a>            <span class="v">options</span>.<span class="m">AddArgument</span>(<span class="s">"silent-launch"</span>);</p>
<p><a>101</a></p>
<p><a>102</a>            <span class="v">options</span>.<span class="m">AddUserProfilePreference</span>(<span class="s">"download.default_directory"</span>, <span class="v">tmpPath</span>);</p>
<p><a>103</a>            <span class="v">options</span>.<span class="m">AddUserProfilePreference</span>(<span class="s">"download.directory_upgrade"</span>, <span class="k">true</span>);</p>
<p><a>104</a>            <span class="v">options</span>.<span class="m">AddUserProfilePreference</span>(<span class="s">"safebrowsing.enabled"</span>, <span class="k">false</span>);</p>
<p><a>105</a>            <span class="v">options</span>.<span class="m">AddUserProfilePreference</span>(<span class="s">"download.prompt_for_download"</span>, <span class="k">false</span>);</p>
<p><a>106</a>            <span class="v">options</span>.<span class="m">AddUserProfilePreference</span>(<span class="s">"profile.default_content_settings.popups"</span>, 0);</p>
<p><a>107</a></p>
<p><a>108</a>            <span class="k">var</span> <span class="v">chromeDriverService</span> = <span class="t">ChromeDriverService</span>.<span class="m">CreateDefaultService</span>();</p>
<p><a>109</a>            <span class="v">chromeDriverService</span>.HideCommandPromptWindow = <span class="k">true</span>;</p>
<p><a>110</a>            <span class="k">var</span> <span class="v">driver</span> = <span class="k">new</span> <span class="t">ChromeDriver</span>(<span class="v">chromeDriverService</span>, <span class="v">options</span>);</p>
<p><a>111</a></p>
<p><a>112</a>            <span class="v">driver</span>.<span class="m">ExecuteChromeCommand</span>(<span class="s">"Page.setDownloadBehavior"</span>, <span class="k">new</span> <span class="t">Dictionary</span>&lt;<span class="k">string</span>, <span class="k">object</span>&gt;</p>
<p><a>113</a>            {</p>
<p><a>114</a>                { <span class="s">"behavior"</span>, <span class="s">"allow"</span> },</p>
<p><a>115</a>                { <span class="s">"downloadPath"</span>, <span class="v">tmpPath</span> }</p>
<p><a>116</a>            });</p>
<p><a>117</a></p>
<p><a>118</a>            <span class="f">return</span> <span class="v">driver</span>;</p>
<p><a>119</a>        }</p>
<p><a>120</a>    }</p>
<p><a>121</a></p>
<div class="l" style="padding-left:143.500px">0 references</div>
<p><a>122</a>    <span class="k">public</span> <span class="k">static</span> <span class="k">class</span> <span class="t">Ext</span></p>
<p><a>123</a>    {</p>
<div class="l" style="padding-left:174px">2 references</div>
<p><a>124</a>        <span class="k">public</span> <span class="k">static</span> <span class="k">void</span> <span class="m">WaitFor</span>(<span class="k">this</span> <span class="t">IWebDriver</span> <span class="v">driver</span>, <span class="t">Func</span>&lt;<span class="t">IWebDriver</span>, <span class="k">bool</span>&gt; <span class="v">predicate</span>, <span class="k">int</span> <span class="v">seconds</span> = 10)</p>
<p><a>125</a>            =&gt; <span class="k">new</span> <span class="t">WebDriverWait</span>(<span class="v">driver</span>, <span class="t">TimeSpan</span>.<span class="m">FromSeconds</span>(<span class="v">seconds</span>))</p>
<p><a>126</a>                .<span class="m">Until</span>(<span class="v">driver</span> =&gt; <span class="v">predicate</span>(<span class="v">driver</span>));</p>
<p><a>127</a></p>
<div class="l" style="padding-left:174px">2 references</div>
<p><a>128</a>        <span class="k">public</span> <span class="k">static</span> <span class="k">bool</span> <span class="m">TryWaitFor</span>(<span class="k">this</span> <span class="t">IWebDriver</span> <span class="v">driver</span>, <span class="t">Func</span>&lt;<span class="t">IWebDriver</span>, <span class="k">bool</span>&gt; <span class="v">predicate</span>, <span class="k">int</span> <span class="v">seconds</span> = 10)</p>
<p><a>129</a>        {</p>
<p><a>130</a>            <span class="f">for</span> (<span class="k">var</span> <span class="v">i</span> = 0; <span class="v">i</span> &lt; 2; <span class="v">i</span>++)</p>
<p><a>131</a>            {</p>
<p><a>132</a>                <span class="f">try</span></p>
<p><a>133</a>                {</p>
<p><a>134</a>                    <span class="v">driver</span>.<span class="m">WaitFor</span>(<span class="v">predicate</span>, <span class="v">seconds</span>);</p>
<p><a>135</a>                    <span class="f">return</span> <span class="k">true</span>;</p>
<p><a>136</a>                }</p>
<p><a>137</a>                <span class="f">catch</span> (<span class="t">Exception</span> <span class="v">e</span>)</p>
<p><a>138</a>                {</p>
<p><a>139</a>                    <span class="v">e</span>.<span class="m">LogError</span>();</p>
<p><a>140</a>                }</p>
<p><a>141</a>            }</p>
<p><a>142</a></p>
<p><a>143</a>            <span class="f">return</span> <span class="k">false</span>;</p>
<p><a>144</a>        }</p>
<p><a>145</a>    }</p>
<p><a>146</a>}</p>
<p><a>147</a></p>
</div></div>
</body></html>
